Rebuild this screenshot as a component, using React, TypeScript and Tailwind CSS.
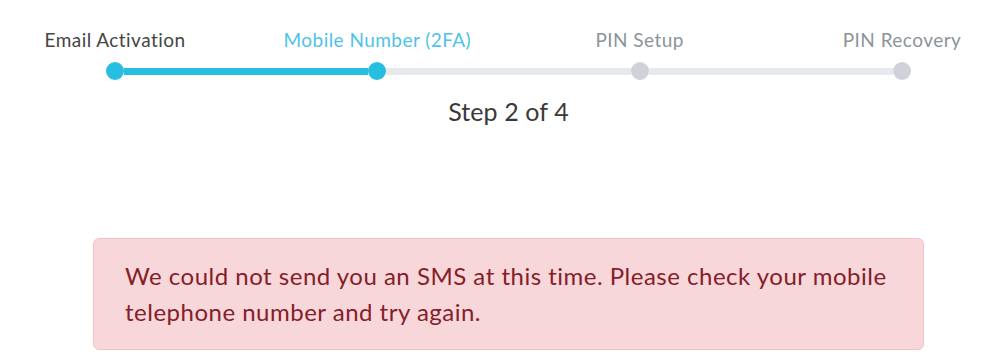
const steps = [
  { label: "Email Activation", state: "done" },
  { label: "Mobile Number (2FA)", state: "active" },
  { label: "PIN Setup", state: "todo" },
  { label: "PIN Recovery", state: "todo" },
];

const labelColor = (state: string) =>
  state === "done" ? "text-[#454545]" : state === "active" ? "text-[#4fc3e6]" : "text-[#8c949b]";

const App = () => {
  return (
    <div className="min-h-[360px] bg-white font-['Lato',sans-serif] tracking-[0.45px]">
      <div className="ml-[93px] w-[831px] pt-[28px]">
        <div className="mx-[13px]">
          <div className="flex justify-between">
            {steps.map((s) => (
              <div key={s.label} className="flex w-[18px] justify-center">
                <span className={`whitespace-nowrap text-[19px] leading-[24px] ${labelColor(s.state)}`}>{s.label}</span>
              </div>
            ))}
          </div>
          <div className="mt-[10px] flex items-center">
            <div className="h-[18px] w-[18px] rounded-full bg-[#26bfe1]" />
            <div className="h-[7px] flex-1 bg-[#26bfe1]" />
            <div className="h-[18px] w-[18px] rounded-full bg-[#26bfe1]" />
            <div className="h-[7px] flex-1 bg-[#e7eaed]" />
            <div className="h-[18px] w-[18px] rounded-full bg-[#cfd3d9]" />
            <div className="h-[7px] flex-1 bg-[#e7eaed]" />
            <div className="h-[18px] w-[18px] rounded-full bg-[#cfd3d9]" />
          </div>
        </div>
        <p className="mt-[15px] text-center text-[25px] leading-[32px] tracking-[0.1px] text-[#3a3a3a]">Step 2 of 4</p>
        <div className="mt-[111px] rounded-[6px] border border-[#f5c2c7] bg-[#f8d7da] px-[31px] py-[19px] text-[24px] leading-[36px] tracking-[0.5px] text-[#842029]">
          We could not send you an SMS at this time. Please check your mobile telephone number and try again.
        </div>
      </div>
    </div>
  );
};

export default App;
